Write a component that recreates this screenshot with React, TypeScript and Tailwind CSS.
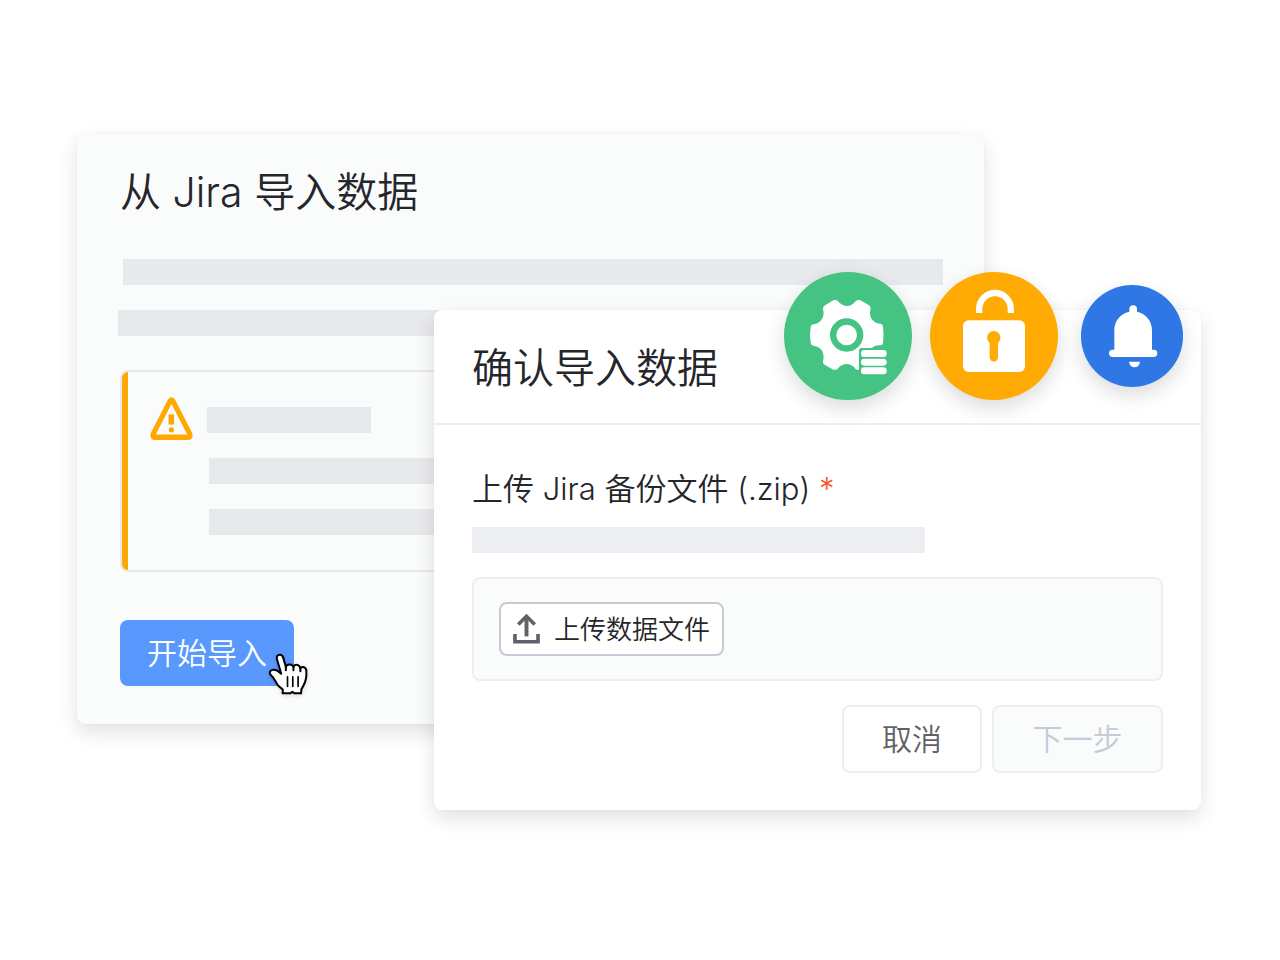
import clsx from "clsx";
import type { ReactNode } from "react";

function Skeleton({ className }: { className?: string }) {
    return <div className={clsx("h-[26px] max-w-full", className)} />;
}

function GearIcon() {
    return (
        <svg viewBox="42 36 384 384" className="h-full w-full" aria-hidden="true">
            <path
                fill="#fff"
                d="M190 121Q198 118 204 124Q216 138 231 138Q246 138 257 124Q263 118 271 121L297 136Q304 141 301 150Q297 167 307 179Q317 191 331 191Q338 192 339 199Q342 225 339 250Q338 256 330 256Q312 257 305 264L275 264Q267 264 267 272L267 329Q262 331 256 326Q245 312 230 312Q215 312 203 326Q197 331 190 329L164 314Q156 309 160 299Q163 281 154 269Q145 258 130 257Q123 256 122 249Q118 225 122 201Q123 194 130 193Q145 192 154 180Q163 168 160 152Q157 142 163 137Z"
            />
            <circle cx="230" cy="225" r="40.5" fill="none" stroke="#45c383" strokeWidth="19" />
            <rect x="273" y="270" width="77" height="21" rx="10" fill="#fff" />
            <rect x="273" y="296" width="77" height="21" rx="10" fill="#fff" />
            <rect x="273" y="322" width="77" height="21" rx="10" fill="#fff" />
        </svg>
    );
}

function LockIcon() {
    return (
        <svg viewBox="30 36 384 384" className="h-full w-full" aria-hidden="true">
            <path d="M177.5 159V147A47.5 48 0 0 1 272.5 147V159" fill="none" stroke="#fff" strokeWidth="19" />
            <rect x="129" y="181" width="186" height="155" rx="17" fill="#fff" />
            <circle cx="221.5" cy="233" r="20" fill="#ffab03" />
            <path d="M221.5 240V292" stroke="#ffab03" strokeWidth="25" strokeLinecap="round" />
        </svg>
    );
}

function BellIcon() {
    return (
        <svg viewBox="33 44 306 306" className="h-full w-full" aria-hidden="true">
            <path
                fill="#fff"
                d="M133 238V180C133 152 150 131 178 124V116A11.5 11.5 0 0 1 201 116V124C229 131 246 152 246 180V238H251A11 11 0 0 1 251 260H128A11 11 0 0 1 128 238Z"
            />
            <path fill="#fff" d="M177 274H210Q207 291 193.5 291Q180 291 177 274Z" />
        </svg>
    );
}

function WarningIcon() {
    return (
        <svg viewBox="119 97 130 131" className="h-[43px] w-[43px] shrink-0" fill="#fea800" aria-hidden="true">
            <path
                fillRule="evenodd"
                d="M173 105Q184 91 195 105L247 207Q252 226 235 228H133Q116 226 121 207ZM184 118L136 211H232Z"
            />
            <rect x="175" y="150" width="17" height="31" />
            <circle cx="183.5" cy="197" r="8" />
        </svg>
    );
}

function UploadIcon() {
    return (
        <svg viewBox="161 135 80 91" className="h-[30px] w-[27px]" fill="none" stroke="#606266" aria-hidden="true">
            <path d="M201 144V203" strokeWidth="12" />
            <path d="M176 167L201 142L226 167" strokeWidth="11" />
            <path d="M166 196V219H236V196" strokeWidth="11" />
        </svg>
    );
}

function HandCursor() {
    return (
        <svg
            viewBox="473 126 121 127"
            className="absolute top-[33px] left-[148px] h-[42px] w-[40px] drop-shadow-sm"
            stroke="#000"
            strokeWidth="6"
            strokeLinejoin="round"
            strokeLinecap="round"
            aria-hidden="true"
        >
            <path
                fill="#fff"
                d="M509 131C501 131 498 137 500 144L513 189C506 182 496 175 487 177C478 179 476 186 481 192C491 201 495 212 502 222C507 230 515 232 518 237L517 248H541L547 243L552 248H573L574 236C580 226 588 212 589 195V180C589 168 575 165 571 173C569 160 554 158 550 168C546 158 530 159 527 168L519 140C517 133 514 131 509 131Z"
            />
            <path fill="none" d="M527 168V178M550 168V178M571 173V181" />
            <path fill="none" strokeWidth="5" d="M532 198V227M548 198V227M564 198V227" />
        </svg>
    );
}

function Badge({ className, children }: { className: string; children: ReactNode }) {
    return <div className={clsx("rounded-full shadow-[0_8px_20px_rgba(0,0,0,0.14)]", className)}>{children}</div>;
}

const cardShadow = "shadow-[0_8px_20px_rgba(0,0,0,0.12),0_0_2px_rgba(0,0,0,0.06)]";

export default function App() {
    return (
        <main className='min-h-screen bg-white pt-[134px] pr-[79px] pb-[149px] pl-[77px] font-[Inter,"Noto_Sans_CJK_SC",sans-serif] font-[350] text-[#25262b]'>
            <div className="relative">
                <section className={clsx("mr-[217px] rounded-lg bg-[#fafbfb] pt-[34px] pb-[38px]", cardShadow)}>
                    <h1 className="px-[43px] text-[41px] leading-[48px]">从 Jira 导入数据</h1>

                    <div className="mt-[43px] flex flex-col items-end gap-[25px] px-[41px]">
                        <Skeleton className="w-[820px] bg-[#e8e9ed]" />
                        <Skeleton className="w-full bg-[#e8e9ed]" />
                    </div>

                    <div className="mt-[34px] px-[43px]">
                        <div className="flex overflow-hidden rounded-lg border-2 border-[#e8e9ed]">
                            <div className="w-1.5 bg-[#fea800]" />
                            <div className="flex flex-1 gap-[14px] px-[22px] pb-[35px]">
                                <div className="pt-[25px]"><WarningIcon /></div>
                                <div className="flex-1 pt-[35px]">
                                    <Skeleton className="w-[164px] bg-[#e8e9ed]" />
                                    <div className="mt-[25px] space-y-[25px] pl-0.5">
                                        <Skeleton className="bg-[#e8e9ed]" />
                                        <Skeleton className="bg-[#e8e9ed]" />
                                    </div>
                                </div>
                            </div>
                        </div>
                    </div>

                    <div className="mt-[48px] px-[43px]">
                        <div className="relative w-[174px]">
                            <button type="button" className="h-[66px] w-full rounded-lg bg-[#5998fc] text-[30px] text-white">开始导入</button>
                            <HandCursor />
                        </div>
                    </div>
                </section>

                <section
                    role="dialog"
                    aria-labelledby="confirm-title"
                    className={clsx("absolute top-[176px] right-0 left-[357px] rounded-lg bg-white", cardShadow)}
                >
                    <header className="border-b-2 border-[#edeef2] px-[38px] pt-[34px] pb-[31px]">
                        <h2 id="confirm-title" className="text-[41px] leading-[48px]">确认导入数据</h2>
                    </header>

                    <div className="px-[38px] pt-[44px] pb-[37px]">
                        <p id="upload-label" className="text-[31px] leading-[40px]">
                            上传 Jira 备份文件 (.zip) <span className="text-[#f9532f]">*</span>
                        </p>
                        <Skeleton className="mt-[18px] w-[453px] bg-[#edeef2]" />

                        <div className="mt-6 rounded-lg border-2 border-[#edeef2] bg-[#fafbfb] px-[25px] py-[23px]">
                            <button
                                type="button"
                                aria-describedby="upload-label"
                                className="flex h-[54px] items-center gap-[14px] rounded-lg border-2 border-[#c7cad6] bg-white px-3 text-[26px]"
                            >
                                <UploadIcon />
                                上传数据文件
                            </button>
                        </div>

                        <footer className="mt-6 flex justify-end gap-[10px] text-[30px]">
                            <button type="button" className="h-[68px] w-[140px] rounded-lg border-2 border-[#edeef2] bg-white text-[#606266]">取消</button>
                            <button type="button" disabled className="h-[68px] w-[171px] rounded-lg border-2 border-[#edeef2] bg-[#fafbfb] text-[#c7cad6]">下一步</button>
                        </footer>
                    </div>

                    <div className="absolute -top-[38px] right-[18px] flex items-center gap-[23px]">
                        <div className="flex gap-[18px]">
                            <Badge className="h-32 w-32 bg-[#45c383]"><GearIcon /></Badge>
                            <Badge className="h-32 w-32 bg-[#ffab03]"><LockIcon /></Badge>
                        </div>
                        <Badge className="h-[102px] w-[102px] bg-[#2f77e5]"><BellIcon /></Badge>
                    </div>
                </section>
            </div>
        </main>
    );
}
